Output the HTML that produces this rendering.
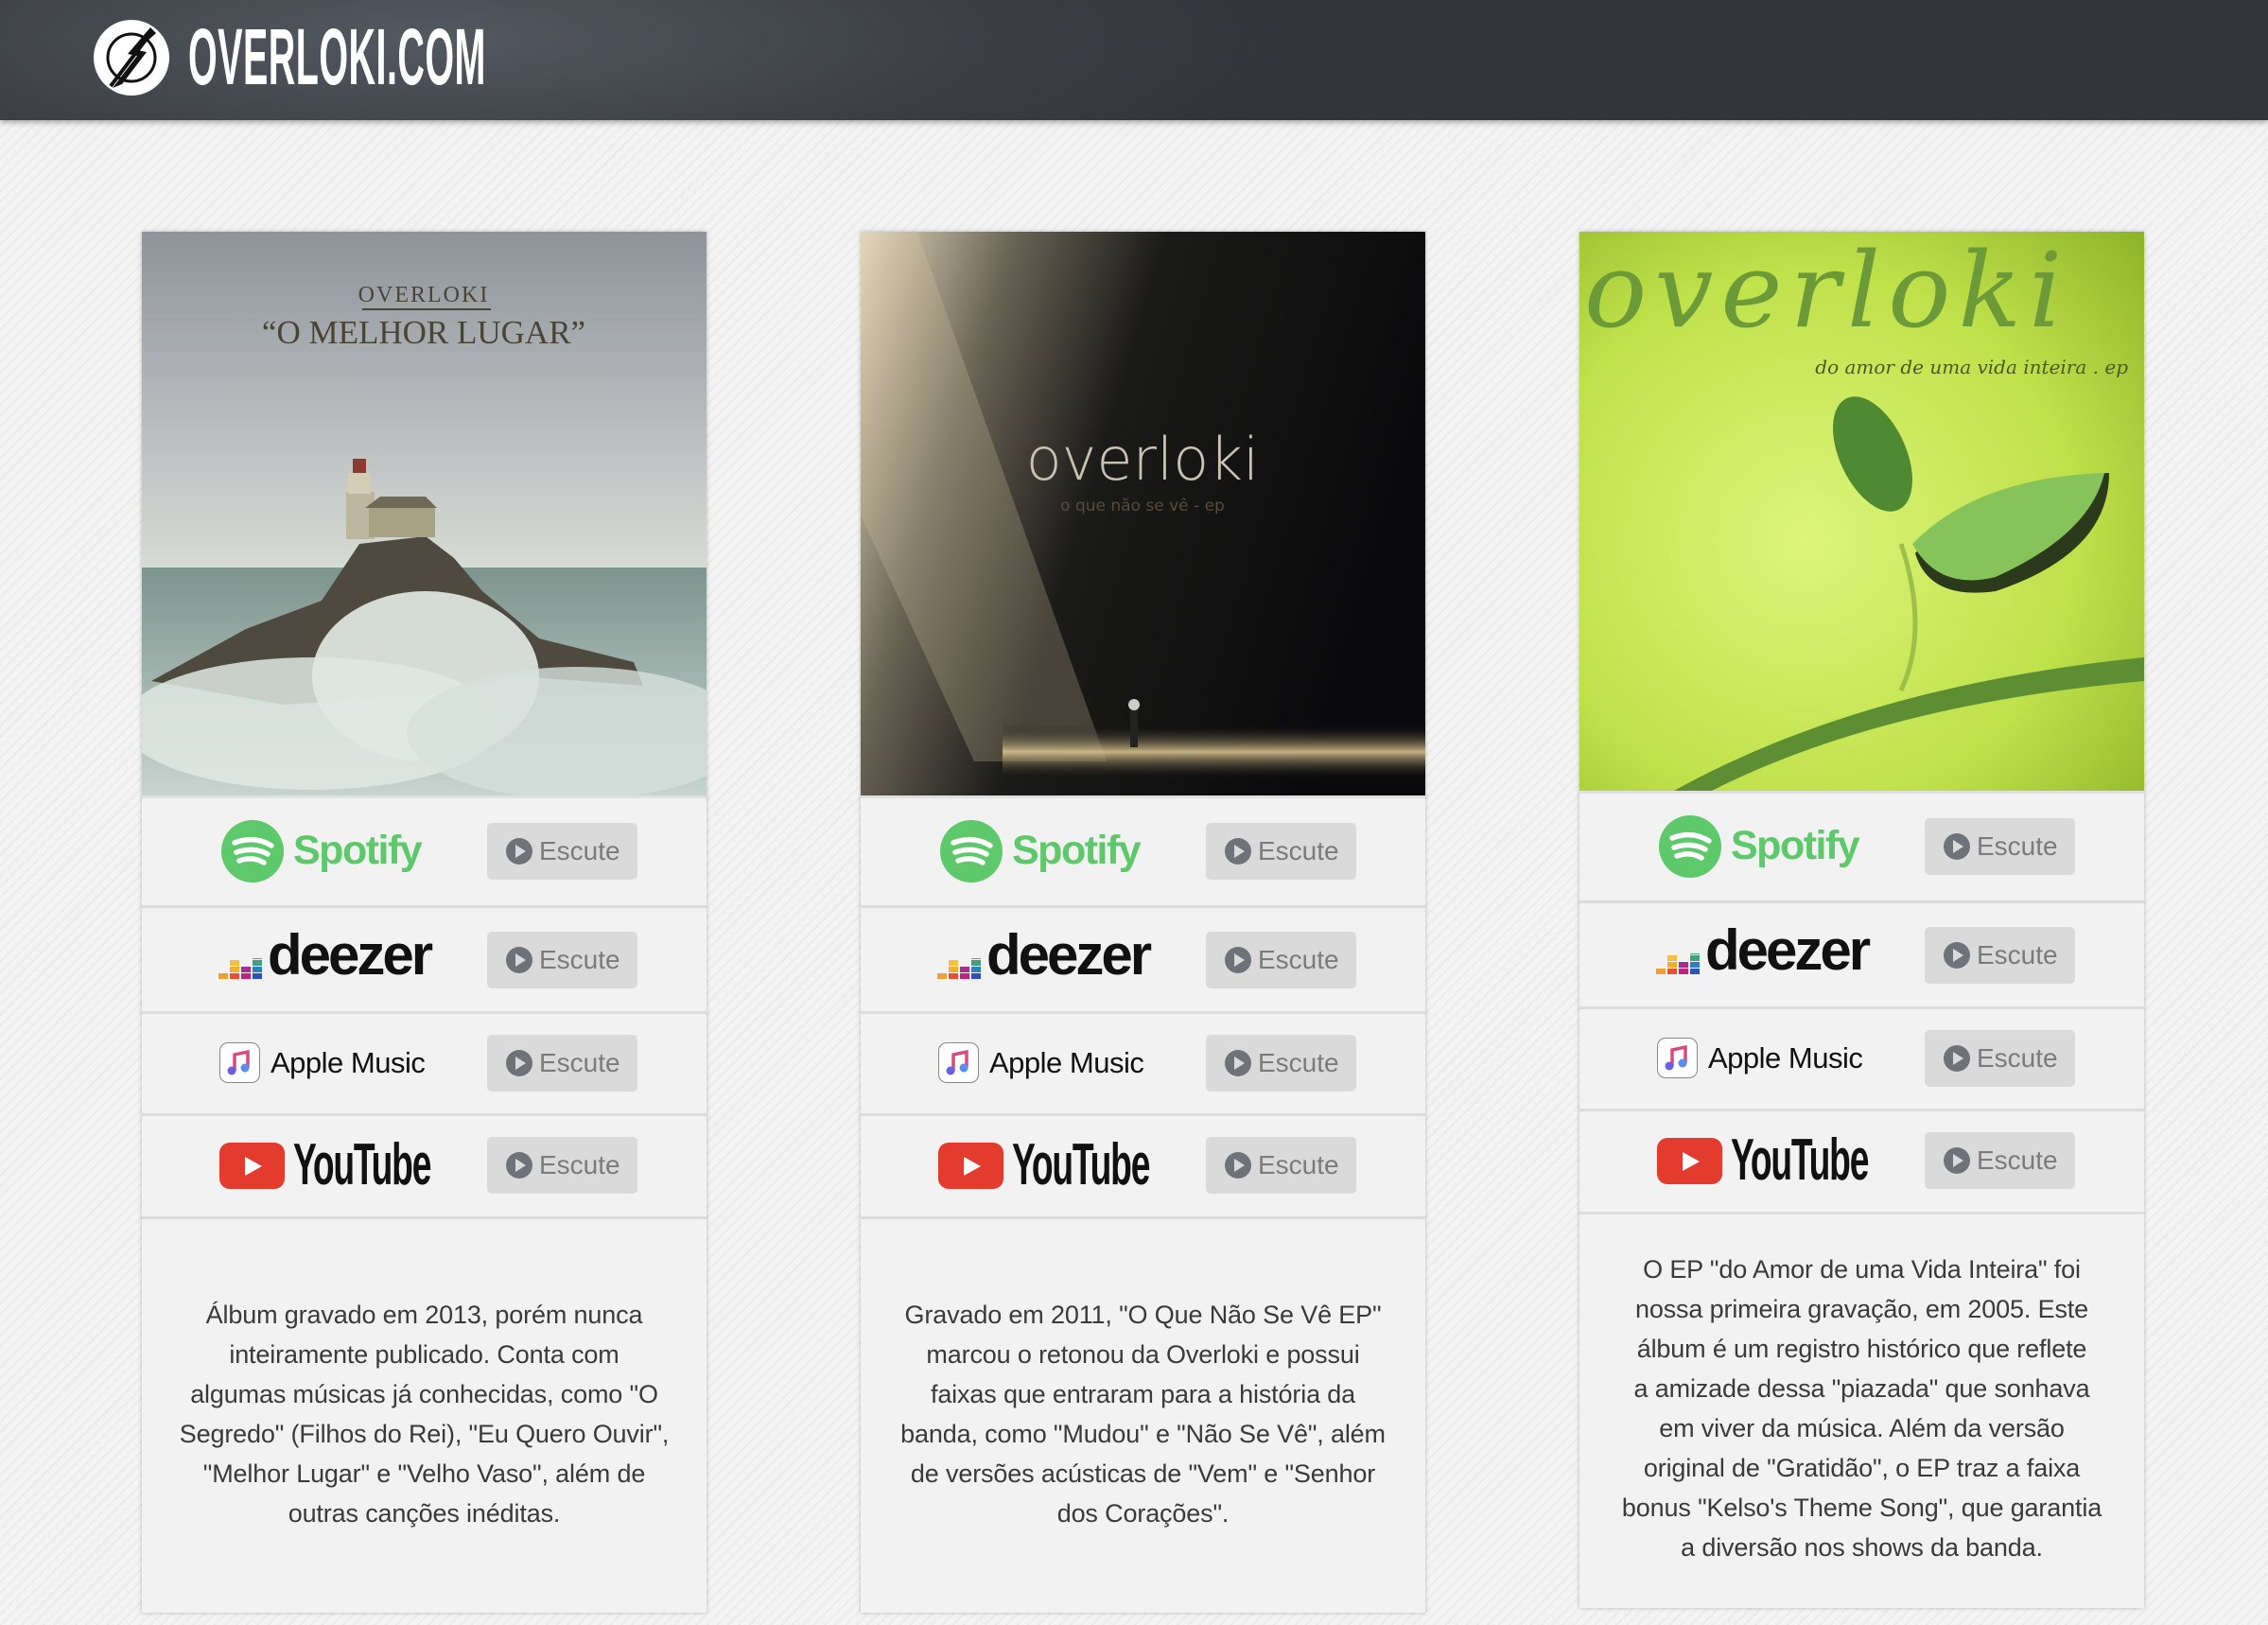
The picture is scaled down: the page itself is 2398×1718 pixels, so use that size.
<!DOCTYPE html>
<html><head><meta charset="utf-8">
<style>
*{margin:0;padding:0;box-sizing:border-box}
html,body{width:2398px;height:1718px;overflow:hidden}
body{background:#f1f1f1 repeating-linear-gradient(135deg,#f3f3f3 0 6px,#ebebeb 6px 8px);font-family:"Liberation Sans",sans-serif;position:relative}
.hdr{position:absolute;left:0;top:0;width:2398px;height:127px;background:radial-gradient(ellipse 900px 200px at 450px 40px,#535961,#3d4147 60%,#32363b);box-shadow:0 2px 6px rgba(0,0,0,.35)}
.logo{position:absolute;left:99px;top:21px;width:80px;height:80px}
.brand{position:absolute;left:199px;top:10px;font-family:"Liberation Sans Narrow","Liberation Sans",sans-serif;font-weight:bold;font-size:84px;color:#fff;transform:scaleX(.47);transform-origin:left top;letter-spacing:1px;line-height:100px;white-space:nowrap}
.card{position:absolute;top:245px;width:597px;height:1460px;background:#f2f2f2;box-shadow:0 0 4px rgba(0,0,0,.25)}
.card svg.art{position:absolute;left:0;top:0;width:597px;height:596px}
.line{position:absolute;left:0;width:597px;height:3px;background:#dcdcdc}
.row{position:absolute;left:0;width:597px;height:0}
.btn{position:absolute;left:365px;top:-30px;width:159px;height:60px;background:#dadada;border-radius:5px;color:#7b7b7b;font-size:28px;line-height:60px;padding-left:55px}
.btn:before{content:"";position:absolute;left:20px;top:16px;width:28px;height:28px;border-radius:50%;background:#6e737a}
.btn:after{content:"";position:absolute;left:30px;top:23px;border-left:11px solid #dadada;border-top:7px solid transparent;border-bottom:7px solid transparent}
.desc{position:absolute;left:0;width:597px;text-align:center;font-size:27px;line-height:42px;color:#3a3a3a;letter-spacing:-.15px}
.sp{position:absolute;left:84px;top:-33px;width:66px;height:66px}
.spt{position:absolute;left:160px;top:-29px;font-size:43px;font-weight:bold;color:#5ec96a;letter-spacing:-1.5px;line-height:56px}
.dz{position:absolute;left:81px;top:-2px}
.dzt{position:absolute;left:133px;top:-38px;font-size:60px;font-weight:bold;color:#111;letter-spacing:-3px;line-height:66px}
.am{position:absolute;left:82px;top:-22px;width:43px;height:43px;border:1.5px solid #888;border-radius:9px;background:#fff}
.amt{position:absolute;left:136px;top:-20px;font-size:31px;color:#111;line-height:40px;letter-spacing:-.5px}
.yt{position:absolute;left:82px;top:-24px;width:69px;height:49px;background:#e33b2e;border-radius:11px}
.yt:after{content:"";position:absolute;left:27px;top:15px;border-left:18px solid #fff;border-top:10px solid transparent;border-bottom:10px solid transparent}
.ytt{position:absolute;left:160px;top:-34px;font-family:"Liberation Sans Narrow","Liberation Sans",sans-serif;font-weight:bold;font-size:62px;color:#111;line-height:68px;transform:scaleX(.6);transform-origin:left top;letter-spacing:-2px;white-space:nowrap}
</style></head><body>
<div class="hdr">
<svg class="logo" viewBox="0 0 80 80"><circle cx="40" cy="40" r="40" fill="#fff"/><circle cx="40" cy="40" r="25" fill="none" stroke="#111" stroke-width="3"/><path d="M60 8 L36 36 L46 38 L20 72 L30 68 L56 34 L46 32 L66 14 Z" fill="#111"/><path d="M62 12 L18 70" stroke="#111" stroke-width="4"/></svg>
<div class="brand">OVERLOKI.COM</div>
</div>

<!-- CARD 1 -->
<div class="card" style="left:150px">
<svg class="art" viewBox="0 0 597 596">
<defs><linearGradient id="s1" x1="0" y1="0" x2="0" y2="1"><stop offset="0" stop-color="#8e949a"/><stop offset=".35" stop-color="#b9bdbf"/><stop offset=".6" stop-color="#d8dcd6"/></linearGradient>
<linearGradient id="sea" x1="0" y1="0" x2="0" y2="1"><stop offset="0" stop-color="#7d958e"/><stop offset="1" stop-color="#c7d3cf"/></linearGradient></defs>
<rect width="597" height="596" fill="url(#s1)"/>
<rect y="355" width="597" height="241" fill="url(#sea)"/>
<path d="M10 475 L110 420 L190 390 L230 330 L300 322 L330 345 L360 380 L420 430 L520 455 L530 480 L400 470 L300 490 L150 500 Z" fill="#4e4a40"/>
<rect x="216" y="275" width="30" height="50" fill="#bdb7a0"/><rect x="218" y="255" width="24" height="22" fill="#d4cdb5"/><rect x="223" y="240" width="14" height="15" fill="#8a3a30"/>
<rect x="240" y="290" width="70" height="33" fill="#a8a285"/><path d="M236 292 L252 280 L300 280 L312 292Z" fill="#6f6a58"/>
<ellipse cx="300" cy="470" rx="120" ry="90" fill="#e4ebe6" opacity=".9"/>
<ellipse cx="180" cy="520" rx="200" ry="70" fill="#dfe7e2" opacity=".85"/>
<ellipse cx="460" cy="530" rx="180" ry="70" fill="#d6e0dc" opacity=".8"/>
<text x="298" y="74" text-anchor="middle" font-family="Liberation Serif,serif" font-size="24" fill="#4a4435" letter-spacing="2">OVERLOKI</text>
<rect x="233" y="81" width="136" height="2" fill="#4a4435"/>
<text x="298" y="118" text-anchor="middle" font-family="Liberation Serif,serif" font-size="35" fill="#4a4435">“O MELHOR LUGAR”</text>
</svg>
<div class="line" style="top:596px;background:#e0e0e0"></div>
<div class="row" style="top:655px"><svg class="sp" viewBox="0 0 66 66"><circle cx="33" cy="33" r="33" fill="#5ec96a"/><path d="M14 24 Q35 16 53 27 M16 34 Q34 28 49 36 M19 43 Q33 38 45 45" stroke="#fff" stroke-width="5.5" fill="none" stroke-linecap="round"/></svg><div class="spt">Spotify</div><div class="btn">Escute</div></div>
<div class="line" style="top:712px"></div>
<div class="row" style="top:770px"><svg class="dz" width="48" height="22" viewBox="0 0 48 22"><rect x="0" y="16" width="10" height="6" fill="#f0a030"/><rect x="12" y="16" width="10" height="6" fill="#e85030"/><rect x="12" y="9" width="10" height="6" fill="#f0b030"/><rect x="12" y="2" width="10" height="6" fill="#f5c040"/><rect x="24" y="16" width="10" height="6" fill="#c02080"/><rect x="24" y="9" width="10" height="6" fill="#a03090"/><rect x="36" y="16" width="10" height="6" fill="#3050c0"/><rect x="36" y="9" width="10" height="6" fill="#3080c0"/><rect x="36" y="2" width="10" height="6" fill="#40a080"/><rect x="36" y="-5" width="10" height="6" fill="#50b070"/></svg><div class="dzt">deezer</div><div class="btn">Escute</div></div>
<div class="line" style="top:824px"></div>
<div class="row" style="top:879px"><div class="am"><svg width="40" height="40" viewBox="0 0 40 40"><path d="M15 29 V12 L29 9 V26" stroke="#d84a80" stroke-width="3.5" fill="none"/><circle cx="12" cy="29" r="4.5" fill="#6a60e0"/><circle cx="26" cy="26" r="4.5" fill="#5a8ef0"/></svg></div><div class="amt">Apple Music</div><div class="btn">Escute</div></div>
<div class="line" style="top:932px"></div>
<div class="row" style="top:987px"><div class="yt"></div><div class="ytt">YouTube</div><div class="btn">Escute</div></div>
<div class="line" style="top:1041px"></div>
<div class="desc" style="top:1124px">Álbum gravado em 2013, porém nunca<br>inteiramente publicado. Conta com<br>algumas músicas já conhecidas, como "O<br>Segredo" (Filhos do Rei), "Eu Quero Ouvir",<br>"Melhor Lugar" e "Velho Vaso", além de<br>outras canções inéditas.</div>
</div>

<!-- CARD 2 -->
<div class="card" style="left:910px">
<svg class="art" viewBox="0 0 597 596">
<defs><linearGradient id="b2" x1="0" y1="0" x2="1" y2=".3"><stop offset="0" stop-color="#e8dcc0"/><stop offset=".25" stop-color="#6a6455"/><stop offset=".5" stop-color="#1a1a18"/><stop offset="1" stop-color="#0a0a0c"/></linearGradient>
<linearGradient id="fl" x1="0" y1="0" x2="0" y2="1"><stop offset="0" stop-color="#000" stop-opacity="0"/><stop offset=".5" stop-color="#d8c490"/><stop offset="1" stop-color="#000" stop-opacity="0"/></linearGradient></defs>
<rect width="597" height="596" fill="url(#b2)"/>
<path d="M0 0 L60 0 L260 560 L120 560 L0 300Z" fill="#d7c9a5" opacity=".25"/>
<rect x="150" y="520" width="447" height="60" fill="url(#fl)" opacity=".9"/>
<rect x="285" y="505" width="8" height="40" fill="#222"/><circle cx="289" cy="500" r="6" fill="#ccc"/>
<text x="298" y="262" text-anchor="middle" font-family="DejaVu Sans,sans-serif" font-weight="200" font-size="62" fill="#c9c2b2">overloki</text>
<text x="298" y="295" text-anchor="middle" font-family="DejaVu Sans,sans-serif" font-size="17" fill="#5a4a38">o que não se vê - ep</text>
</svg>
<div class="line" style="top:596px;background:#e0e0e0"></div>
<div class="row" style="top:655px"><svg class="sp" viewBox="0 0 66 66"><circle cx="33" cy="33" r="33" fill="#5ec96a"/><path d="M14 24 Q35 16 53 27 M16 34 Q34 28 49 36 M19 43 Q33 38 45 45" stroke="#fff" stroke-width="5.5" fill="none" stroke-linecap="round"/></svg><div class="spt">Spotify</div><div class="btn">Escute</div></div>
<div class="line" style="top:712px"></div>
<div class="row" style="top:770px"><svg class="dz" width="48" height="22" viewBox="0 0 48 22"><rect x="0" y="16" width="10" height="6" fill="#f0a030"/><rect x="12" y="16" width="10" height="6" fill="#e85030"/><rect x="12" y="9" width="10" height="6" fill="#f0b030"/><rect x="12" y="2" width="10" height="6" fill="#f5c040"/><rect x="24" y="16" width="10" height="6" fill="#c02080"/><rect x="24" y="9" width="10" height="6" fill="#a03090"/><rect x="36" y="16" width="10" height="6" fill="#3050c0"/><rect x="36" y="9" width="10" height="6" fill="#3080c0"/><rect x="36" y="2" width="10" height="6" fill="#40a080"/><rect x="36" y="-5" width="10" height="6" fill="#50b070"/></svg><div class="dzt">deezer</div><div class="btn">Escute</div></div>
<div class="line" style="top:824px"></div>
<div class="row" style="top:879px"><div class="am"><svg width="40" height="40" viewBox="0 0 40 40"><path d="M15 29 V12 L29 9 V26" stroke="#d84a80" stroke-width="3.5" fill="none"/><circle cx="12" cy="29" r="4.5" fill="#6a60e0"/><circle cx="26" cy="26" r="4.5" fill="#5a8ef0"/></svg></div><div class="amt">Apple Music</div><div class="btn">Escute</div></div>
<div class="line" style="top:932px"></div>
<div class="row" style="top:987px"><div class="yt"></div><div class="ytt">YouTube</div><div class="btn">Escute</div></div>
<div class="line" style="top:1041px"></div>
<div class="desc" style="top:1124px">Gravado em 2011, "O Que Não Se Vê EP"<br>marcou o retonou da Overloki e possui<br>faixas que entraram para a história da<br>banda, como "Mudou" e "Não Se Vê", além<br>de versões acústicas de "Vem" e "Senhor<br>dos Corações".</div>
</div>

<!-- CARD 3 -->
<div class="card" style="left:1670px;height:1455px">
<svg class="art" viewBox="0 0 597 591" style="height:591px">
<defs><radialGradient id="g3" cx=".4" cy=".55" r=".8"><stop offset="0" stop-color="#dcf57a"/><stop offset=".6" stop-color="#bfe14a"/><stop offset="1" stop-color="#8fb52a"/></radialGradient></defs>
<rect width="597" height="591" fill="url(#g3)"/>
<text x="5" y="100" font-family="DejaVu Serif,serif" font-style="italic" font-size="110" fill="#6c9a38" letter-spacing="8">overloki</text>
<text x="580" y="150" text-anchor="end" font-family="DejaVu Serif,serif" font-style="italic" font-size="20" fill="#4a5a20">do amor de uma vida inteira . ep</text>
<ellipse cx="310" cy="235" rx="35" ry="65" transform="rotate(-25 310 235)" fill="#4f8a32"/>
<path d="M355 340 Q420 260 560 255 Q560 340 440 380 Q370 390 355 340Z" fill="#2a3a1a"/>
<path d="M352 330 Q420 260 555 255 Q540 320 440 365 Q380 380 352 330Z" fill="#86c35a"/>
<path d="M340 330 Q370 420 340 485" stroke="#9cc04a" stroke-width="5" fill="none"/>
<path d="M100 591 Q300 480 597 450 L597 475 Q320 500 140 591Z" fill="#5e8e34"/>
</svg>
<div class="line" style="top:591px;background:#e0e0e0"></div>
<div class="row" style="top:650px"><svg class="sp" viewBox="0 0 66 66"><circle cx="33" cy="33" r="33" fill="#5ec96a"/><path d="M14 24 Q35 16 53 27 M16 34 Q34 28 49 36 M19 43 Q33 38 45 45" stroke="#fff" stroke-width="5.5" fill="none" stroke-linecap="round"/></svg><div class="spt">Spotify</div><div class="btn">Escute</div></div>
<div class="line" style="top:707px"></div>
<div class="row" style="top:765px"><svg class="dz" width="48" height="22" viewBox="0 0 48 22"><rect x="0" y="16" width="10" height="6" fill="#f0a030"/><rect x="12" y="16" width="10" height="6" fill="#e85030"/><rect x="12" y="9" width="10" height="6" fill="#f0b030"/><rect x="12" y="2" width="10" height="6" fill="#f5c040"/><rect x="24" y="16" width="10" height="6" fill="#c02080"/><rect x="24" y="9" width="10" height="6" fill="#a03090"/><rect x="36" y="16" width="10" height="6" fill="#3050c0"/><rect x="36" y="9" width="10" height="6" fill="#3080c0"/><rect x="36" y="2" width="10" height="6" fill="#40a080"/><rect x="36" y="-5" width="10" height="6" fill="#50b070"/></svg><div class="dzt">deezer</div><div class="btn">Escute</div></div>
<div class="line" style="top:819px"></div>
<div class="row" style="top:874px"><div class="am"><svg width="40" height="40" viewBox="0 0 40 40"><path d="M15 29 V12 L29 9 V26" stroke="#d84a80" stroke-width="3.5" fill="none"/><circle cx="12" cy="29" r="4.5" fill="#6a60e0"/><circle cx="26" cy="26" r="4.5" fill="#5a8ef0"/></svg></div><div class="amt">Apple Music</div><div class="btn">Escute</div></div>
<div class="line" style="top:927px"></div>
<div class="row" style="top:982px"><div class="yt"></div><div class="ytt">YouTube</div><div class="btn">Escute</div></div>
<div class="line" style="top:1036px"></div>
<div class="desc" style="top:1076px">O EP "do Amor de uma Vida Inteira" foi<br>nossa primeira gravação, em 2005. Este<br>álbum é um registro histórico que reflete<br>a amizade dessa "piazada" que sonhava<br>em viver da música. Além da versão<br>original de "Gratidão", o EP traz a faixa<br>bonus "Kelso's Theme Song", que garantia<br>a diversão nos shows da banda.</div>
</div>
</body></html>
